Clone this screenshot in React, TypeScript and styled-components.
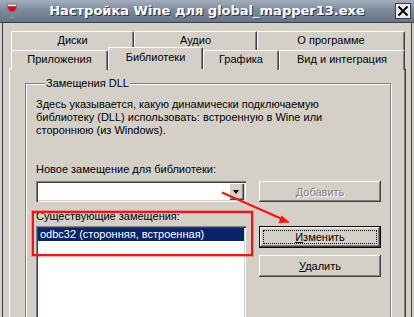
import React from "react";
import styled, { createGlobalStyle } from "styled-components";

const UI_FONT = `"Liberation Sans", Arial, sans-serif`;

const GlobalStyle = createGlobalStyle`
  html, body { margin: 0; padding: 0; }
  body { width: 414px; height: 317px; overflow: hidden; background: #d4d0c8; }
`;

const Window = styled.div`
  position: relative;
  width: 414px;
  height: 317px;
  overflow: hidden;
  display: flex;
  flex-direction: column;
  background: #d4d0c8;
  font-family: ${UI_FONT};
  font-size: 11px;
  color: #000;
`;

const TitleBar = styled.div`
  flex: none;
  height: 22px;
  display: flex;
  align-items: center;
  padding: 0 3px 0 5px;
  background: linear-gradient(to bottom, #a3afbd 0%, #7c8a9c 45%, #66758a 100%);
`;

const TitleText = styled.div`
  flex: 1;
  text-align: center;
  color: #fff;
  font-family: "DejaVu Sans", sans-serif;
  font-weight: bold;
  font-size: 13px;
  line-height: 22px;
  text-shadow: 1px 1px 0 #2a3340;
  white-space: nowrap;
`;

const CloseBox = styled.div`
  box-sizing: border-box;
  width: 16px;
  height: 16px;
  background: #eceae6;
  border: 1px solid #3c3c3c;
  display: flex;
  align-items: center;
  justify-content: center;
`;

const Body = styled.div`
  flex: 1;
  min-height: 0;
  padding: 9px 8px 0 9px;
  box-shadow: inset 0 1px #404040, inset 2px 0 #d4d0c8, inset 3px 0 #404040,
    inset -2px 0 #d4d0c8, inset -3px 0 #404040;
`;

const TabRow = styled.div<{ $front?: boolean }>`
  display: flex;
  align-items: flex-start;
  padding-left: 2px;
  height: ${(p) => (p.$front ? 18 : 19)}px;
  position: relative;
  z-index: ${(p) => (p.$front ? 3 : 2)};
`;

const Tab = styled.div<{ $w: number; $active?: boolean }>`
  box-sizing: border-box;
  flex: none;
  width: ${(p) => p.$w}px;
  height: ${(p) => (p.$active ? 22 : 20)}px;
  margin-top: ${(p) => (p.$active ? -3 : 0)}px;
  background: #d4d0c8;
  border-top: 1px solid #fff;
  border-left: 1px solid #fff;
  border-right: 1px solid #404040;
  box-shadow: inset -1px 0 #808080;
  border-top-left-radius: 2px;
  border-top-right-radius: 2px;
  display: flex;
  justify-content: center;
  line-height: 13px;
  padding-top: ${(p) => (p.$active ? 3 : 2)}px;
  white-space: nowrap;
`;

const Panel = styled.div`
  position: relative;
  z-index: 1;
  box-sizing: border-box;
  height: 260px;
  border-top: 1px solid #fff;
  border-left: 1px solid #fff;
  border-right: 1px solid #404040;
  box-shadow: inset -1px 0 #808080;
  padding: 8px 14px 0 15px;
`;

const GroupBox = styled.fieldset`
  margin: 0;
  padding: 0 9px 0 10px;
  min-width: 0;
  height: 260px;
  border: 1px solid #808080;
  box-shadow: inset 1px 1px #fff, 1px 1px #fff;
`;

const Legend = styled.legend`
  margin-left: 9px;
  padding: 0 1px;
  line-height: 13px;
  background: #d4d0c8;
`;

const Description = styled.div`
  margin-top: 8px;
  line-height: 13px;
  height: 39px;
`;

const FieldLabel = styled.div<{ $top: number }>`
  margin-top: ${(p) => p.$top}px;
  line-height: 13px;
  white-space: nowrap;
`;

const Row = styled.div<{ $top: number }>`
  display: grid;
  grid-template-columns: 210px 122px;
  column-gap: 13px;
  align-items: start;
  margin-top: ${(p) => p.$top}px;
`;

const Combo = styled.div`
  box-sizing: border-box;
  height: 21px;
  padding: 2px;
  background: #fff;
  box-shadow: inset 1px 1px #808080, inset 2px 2px #404040, inset -1px -1px #fff,
    inset -2px -2px #d4d0c8;
  display: flex;
  justify-content: flex-end;
`;

const ComboButton = styled.div`
  box-sizing: border-box;
  width: 15px;
  height: 17px;
  background: #d4d0c8;
  box-shadow: inset 1px 1px #fff, inset -1px -1px #404040, inset -2px -2px #808080;
  display: flex;
  align-items: center;
  justify-content: center;
`;

const Arrow = styled.div`
  width: 0;
  height: 0;
  border-left: 3.5px solid transparent;
  border-right: 3.5px solid transparent;
  border-top: 4px solid #000;
  margin-left: -1px;
`;

const Button = styled.button<{ $default?: boolean; $h?: number }>`
  position: relative;
  box-sizing: border-box;
  width: 122px;
  height: ${(p) => p.$h ?? 22}px;
  margin: 0;
  padding: 0;
  background: #d4d0c8;
  border: ${(p) => (p.$default ? "1px solid #000" : "none")};
  box-shadow: inset -1px -1px #404040, inset 1px 1px #fff, inset -2px -2px #808080;
  font-family: ${UI_FONT};
  font-size: 11px;
  color: #000;
  &:disabled {
    color: #808080;
    text-shadow: 1px 1px 0 #fff;
  }
  ${(p) =>
    p.$default
      ? `&::after { content: ""; position: absolute; inset: 3px; border: 1px dotted #000; }`
      : ""}
`;

const Accel = styled.span`
  text-decoration: underline;
`;

const ButtonStack = styled.div`
  display: flex;
  flex-direction: column;
  gap: 7px;
  padding-top: 16px;
`;

const ListBox = styled.div`
  box-sizing: border-box;
  margin-top: 3px;
  height: 120px;
  padding: 2px;
  background: #fff;
  box-shadow: inset 1px 1px #808080, inset 2px 2px #404040, inset -1px -1px #fff,
    inset -2px -2px #d4d0c8;
`;

const ListItem = styled.div<{ $selected?: boolean }>`
  height: 13px;
  line-height: 13px;
  padding-left: 2px;
  background: ${(p) => (p.$selected ? "#0a246a" : "transparent")};
  color: ${(p) => (p.$selected ? "#fff" : "#000")};
  white-space: nowrap;
`;

const HighlightBox = styled.div`
  position: absolute;
  left: 32px;
  top: 211px;
  width: 221px;
  height: 45px;
  box-sizing: border-box;
  border: 2px solid #ff1010;
  box-shadow: 0 0 0 1px rgba(255, 40, 40, 0.35);
  pointer-events: none;
  z-index: 10;
`;

const Annotation = styled.svg`
  position: absolute;
  left: 0;
  top: 0;
  pointer-events: none;
  z-index: 10;
`;

function WineIcon() {
  return (
    <svg width="14" height="16" viewBox="0 0 14 16">
      <path d="M2 1 L12 1 L11 6 Q10 9 7 9.5 Q4 9 3 6 Z" fill="#e4e4e4" stroke="#6a6a6a" strokeWidth="0.8" />
      <path d="M2.6 3.2 L11.4 3.2 L10.8 6 Q9.8 8.6 7 9 Q4.2 8.6 3.3 6 Z" fill="#c8101a" />
      <rect x="6.3" y="9.5" width="1.4" height="4" fill="#8a8a8a" />
      <path d="M3.5 15 Q7 12.8 10.5 15 Z" fill="#9a9a9a" />
    </svg>
  );
}

function CloseIcon() {
  return (
    <svg width="12" height="12" viewBox="0 0 12 12">
      <path d="M1.5 1.5 L10.5 10.5 M10.5 1.5 L1.5 10.5" stroke="#000" strokeWidth="2" />
    </svg>
  );
}

export default function App() {
  return (
    <Window>
      <GlobalStyle />
      <TitleBar>
        <WineIcon />
        <TitleText>Настройка Wine для global_mapper13.exe</TitleText>
        <CloseBox>
          <CloseIcon />
        </CloseBox>
      </TitleBar>
      <Body>
        <TabRow>
          <Tab $w={123}>Диски</Tab>
          <Tab $w={123}>Аудио</Tab>
          <Tab $w={148}>О программе</Tab>
        </TabRow>
        <TabRow $front>
          <Tab $w={97}>Приложения</Tab>
          <Tab $w={95} $active>
            Библиотеки
          </Tab>
          <Tab $w={76}>Графика</Tab>
          <Tab $w={126}>Вид и интеграция</Tab>
        </TabRow>
        <Panel>
          <GroupBox>
            <Legend>Замещения DLL</Legend>
            <Description>
              Здесь указывается, какую динамически подключаемую
              <br />
              библиотеку (DLL) использовать: встроенную в Wine или
              <br />
              стороннюю (из Windows).
            </Description>
            <FieldLabel $top={26}>Новое замещение для библиотеки:</FieldLabel>
            <Row $top={5}>
              <Combo>
                <ComboButton>
                  <Arrow />
                </ComboButton>
              </Combo>
              <Button disabled $h={21}>
                <Accel>Д</Accel>обавить
              </Button>
            </Row>
            <Row $top={8}>
              <div>
                <FieldLabel $top={0}>Существующие замещения:</FieldLabel>
                <ListBox>
                  <ListItem $selected>odbc32 (сторонняя, встроенная)</ListItem>
                </ListBox>
              </div>
              <ButtonStack>
                <Button $default>
                  <Accel>И</Accel>зменить
                </Button>
                <Button>
                  <Accel>У</Accel>далить
                </Button>
              </ButtonStack>
            </Row>
          </GroupBox>
        </Panel>
      </Body>
      <HighlightBox />
      <Annotation width="414" height="317" viewBox="0 0 414 317">
        <line x1="222" y1="192.5" x2="282" y2="219" stroke="#ff1010" strokeWidth="2" />
        <polygon points="290,222.5 278.5,223 281.5,215.5" fill="#ff1010" />
      </Annotation>
    </Window>
  );
}
